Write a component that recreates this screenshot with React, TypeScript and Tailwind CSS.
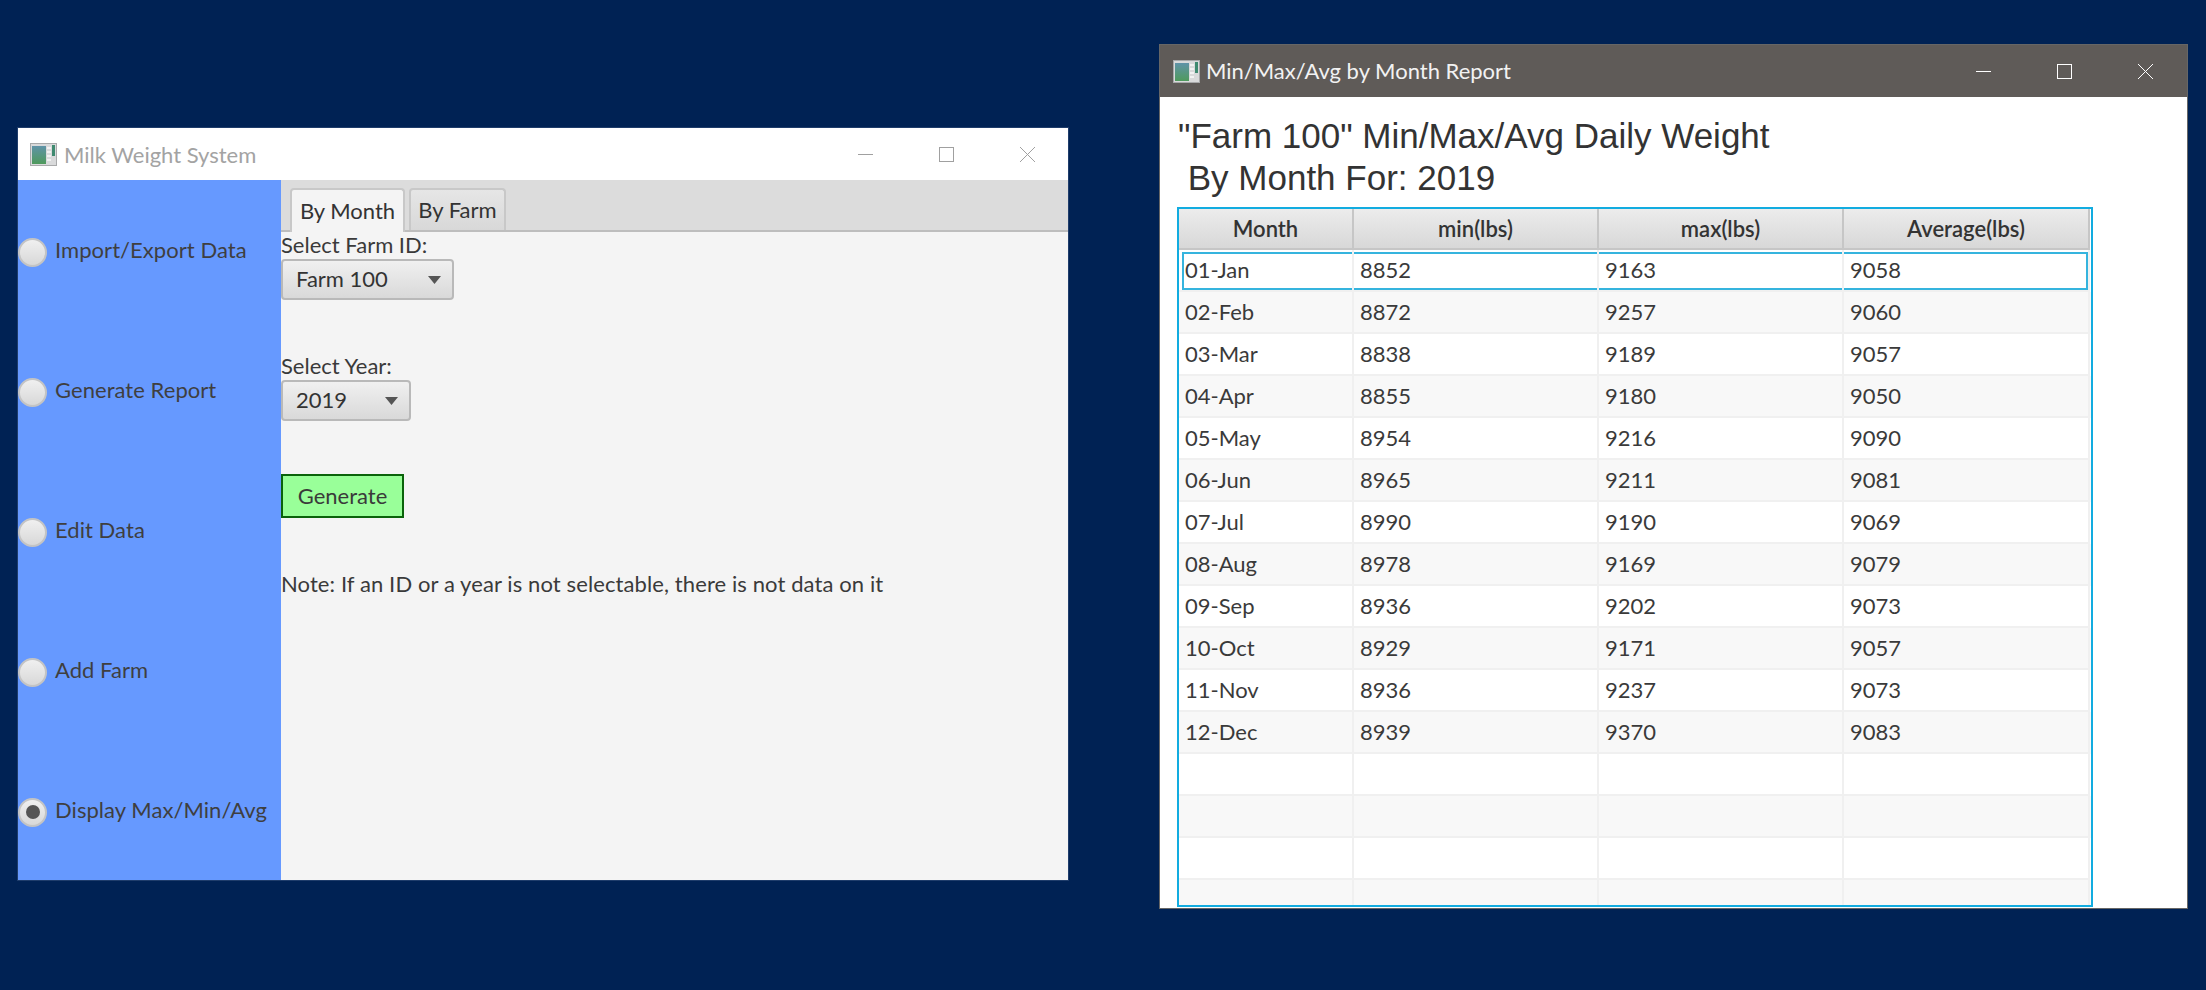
import React from "react";

const UI = "font-['Lato',sans-serif]";

function AppIcon() {
  return (
    <svg width="27" height="23" viewBox="0 0 27 23" className="shrink-0">
      <defs>
        <linearGradient id="g1" x1="0" y1="0" x2="0" y2="1">
          <stop offset="0" stopColor="#5f93a8" />
          <stop offset="1" stopColor="#4f9a5c" />
        </linearGradient>
      </defs>
      <rect x="0" y="0" width="27" height="23" fill="#d9dadb" />
      <rect x="0.5" y="0.5" width="26" height="22" fill="none" stroke="#a8a9aa" />
      <rect x="2" y="3" width="14" height="18" fill="url(#g1)" />
      <rect x="17" y="4" width="4" height="2" fill="#f2f2f2" />
      <rect x="17" y="8" width="4" height="2" fill="#f2f2f2" />
      <rect x="17" y="12" width="4" height="2" fill="#f2f2f2" />
      <rect x="17" y="16" width="4" height="2" fill="#f2f2f2" />
      <rect x="22" y="2" width="3" height="11" fill="#3f8a70" />
    </svg>
  );
}

function WinControls({ color }: { color: string }) {
  return (
    <div className="ml-auto flex items-center gap-[66px]">
      <svg width="15" height="15" viewBox="0 0 15 15">
        <line x1="0" y1="7.5" x2="15" y2="7.5" stroke={color} strokeWidth="1" />
      </svg>
      <svg width="15" height="15" viewBox="0 0 15 15">
        <rect x="0.5" y="0.5" width="14" height="14" fill="none" stroke={color} strokeWidth="1" />
      </svg>
      <svg width="15" height="15" viewBox="0 0 15 15">
        <line x1="0" y1="0" x2="15" y2="15" stroke={color} strokeWidth="1" />
        <line x1="15" y1="0" x2="0" y2="15" stroke={color} strokeWidth="1" />
      </svg>
    </div>
  );
}

function Radio({ label, checked }: { label: string; checked?: boolean }) {
  return (
    <div className="h-[140px] flex items-center pt-[4px]">
      <div className="w-[29px] h-[29px] rounded-full border-2 border-[#c4c4c4] bg-gradient-to-b from-[#f0f0f0] to-[#d8d8d8] flex items-center justify-center shrink-0">
        {checked && <div className="w-[14px] h-[14px] rounded-full bg-[#555555]" />}
      </div>
      <span className="ml-[8px] mb-[4px] text-[22px] leading-[24px] text-[#3f3f3f] whitespace-nowrap tracking-[0.05px]">{label}</span>
    </div>
  );
}

function Combo({ label, width }: { label: string; width: string }) {
  return (
    <div className={`${width} h-[41px] rounded-[4px] border-2 border-[#b9b9b9] bg-gradient-to-b from-[#f0f0f0] to-[#d9d9d9] flex items-center pl-[13px] pr-[11px]`}>
      <span className="mb-[2px] text-[22px] text-[#333333]">{label}</span>
      <svg width="13" height="8" viewBox="0 0 13 8" className="ml-auto">
        <polygon points="0,0 13,0 6.5,8" fill="#555555" />
      </svg>
    </div>
  );
}

function Tab({ label, active, width }: { label: string; active?: boolean; width: string }) {
  return (
    <div
      className={`${width} rounded-t-[4px] border-2 border-b-0 border-[#c8c8c8] flex items-center justify-center pb-[1px] text-[22px] text-[#333333] ${
        active ? "bg-[#f4f4f4] relative z-10 mb-[-2px] h-[44px]" : "h-[42px] bg-gradient-to-b from-[#e6e6e6] to-[#d8d8d8]"
      }`}
    >
      {label}
    </div>
  );
}

const rows = [
  ["01-Jan", "8852", "9163", "9058"],
  ["02-Feb", "8872", "9257", "9060"],
  ["03-Mar", "8838", "9189", "9057"],
  ["04-Apr", "8855", "9180", "9050"],
  ["05-May", "8954", "9216", "9090"],
  ["06-Jun", "8965", "9211", "9081"],
  ["07-Jul", "8990", "9190", "9069"],
  ["08-Aug", "8978", "9169", "9079"],
  ["09-Sep", "8936", "9202", "9073"],
  ["10-Oct", "8929", "9171", "9057"],
  ["11-Nov", "8936", "9237", "9073"],
  ["12-Dec", "8939", "9370", "9083"],
  ["", "", "", ""],
  ["", "", "", ""],
  ["", "", "", ""],
  ["", "", "", ""],
];

const widths = ["w-[175px]", "w-[245px]", "w-[245px]", "w-[246px]"];
const headers = ["Month", "min(lbs)", "max(lbs)", "Average(lbs)"];

function Table() {
  return (
    <div className="w-[916px] h-[700px] ml-[17px] border-2 border-[#12ace0] overflow-hidden bg-white shrink-0">
      <div className="flex h-[41px]">
        {headers.map((h, i) => (
          <div
            key={h}
            className={`${widths[i]} shrink-0 border-r-2 border-b-2 border-[#c6c6c6] bg-gradient-to-b from-[#ececec] to-[#d8d8d8] flex items-center justify-center text-[22px] font-semibold text-[#333333]`}
          >
            {h}
          </div>
        ))}
      </div>
      {rows.map((r, i) => (
        <div key={i} className={`flex h-[42px] relative ${i % 2 === 0 ? "bg-white" : "bg-[#f8f8f8]"}`}>
          {i === 0 && <div className="absolute left-[3px] top-[2px] w-[906px] h-[38px] border-2 border-[#35b4de]" />}
          {r.map((c, j) => (
            <div
              key={j}
              className={`${widths[j]} relative shrink-0 border-r-2 border-b-2 border-[#f0f0f0] flex items-center pl-[6px] pb-[2px] text-[22px] text-[#3a3a3a]`}
            >
              {c}
            </div>
          ))}
        </div>
      ))}
    </div>
  );
}

export default function App() {
  return (
    <div className={`${UI} relative w-[2206px] h-[990px] bg-[#002254] overflow-hidden`}>
      {/* Milk Weight System window */}
      <div className="absolute left-[18px] top-[128px] w-[1050px] h-[752px] flex flex-col bg-white shadow-[0_0_0_1px_#1f3d6b]">
        <div className="h-[52px] flex items-center pl-[12px] pr-[33px] shrink-0">
          <AppIcon />
          <span className="ml-[7px] text-[22px] text-[#a3a3a3]">Milk Weight System</span>
          <WinControls color="#a0a0a0" />
        </div>
        <div className="flex flex-1">
          <div className="w-[263px] bg-[#6699ff] flex flex-col shrink-0">
            <Radio label="Import/Export Data" />
            <Radio label="Generate Report" />
            <Radio label="Edit Data" />
            <Radio label="Add Farm" />
            <Radio label="Display Max/Min/Avg" checked />
          </div>
          <div className="flex-1 bg-[#f4f4f4] flex flex-col">
            <div className="h-[52px] bg-[#dcdcdc] border-b-2 border-[#bdbdbd] flex items-end gap-[4px] pl-[9px] shrink-0">
              <Tab label="By Month" active width="w-[115px]" />
              <Tab label="By Farm" width="w-[97px]" />
            </div>
            <div className="flex flex-col text-[22px] text-[#3a3a3a]">
              <div className="h-[27px] leading-[26px]">Select Farm ID:</div>
              <Combo label="Farm 100" width="w-[173px]" />
              <div className="h-[80px] leading-[27px] pt-[52px]">Select Year:</div>
              <Combo label="2019" width="w-[130px]" />
              <div className="mt-[53px] w-[123px] h-[44px] border-2 border-[#0a630a] bg-[#99ff99] flex items-center justify-center pb-[1px]">
                Generate
              </div>
              <div className="mt-[52px] leading-[27px] whitespace-nowrap tracking-[0.1px]">Note: If an ID or a year is not selectable, there is not data on it</div>
            </div>
          </div>
        </div>
      </div>

      {/* Report window */}
      <div className="absolute left-[1160px] top-[45px] w-[1027px] h-[863px] flex flex-col bg-white shadow-[0_0_0_1px_#666666]">
        <div className="h-[52px] bg-[#5f5b58] flex items-center pl-[13px] pr-[34px] shrink-0">
          <AppIcon />
          <span className="ml-[6px] mb-[2px] text-[22px] text-[#f2f2f2]">Min/Max/Avg by Month Report</span>
          <WinControls color="#ffffff" />
        </div>
        <div className="h-[110px] pt-[18px] pl-[18px] font-['Liberation_Sans',sans-serif] text-[35px] leading-[42px] text-[#333333] whitespace-pre shrink-0">
          <div>"Farm 100" Min/Max/Avg Daily Weight</div>
          <div> By Month For: 2019</div>
        </div>
        <Table />
      </div>
    </div>
  );
}
